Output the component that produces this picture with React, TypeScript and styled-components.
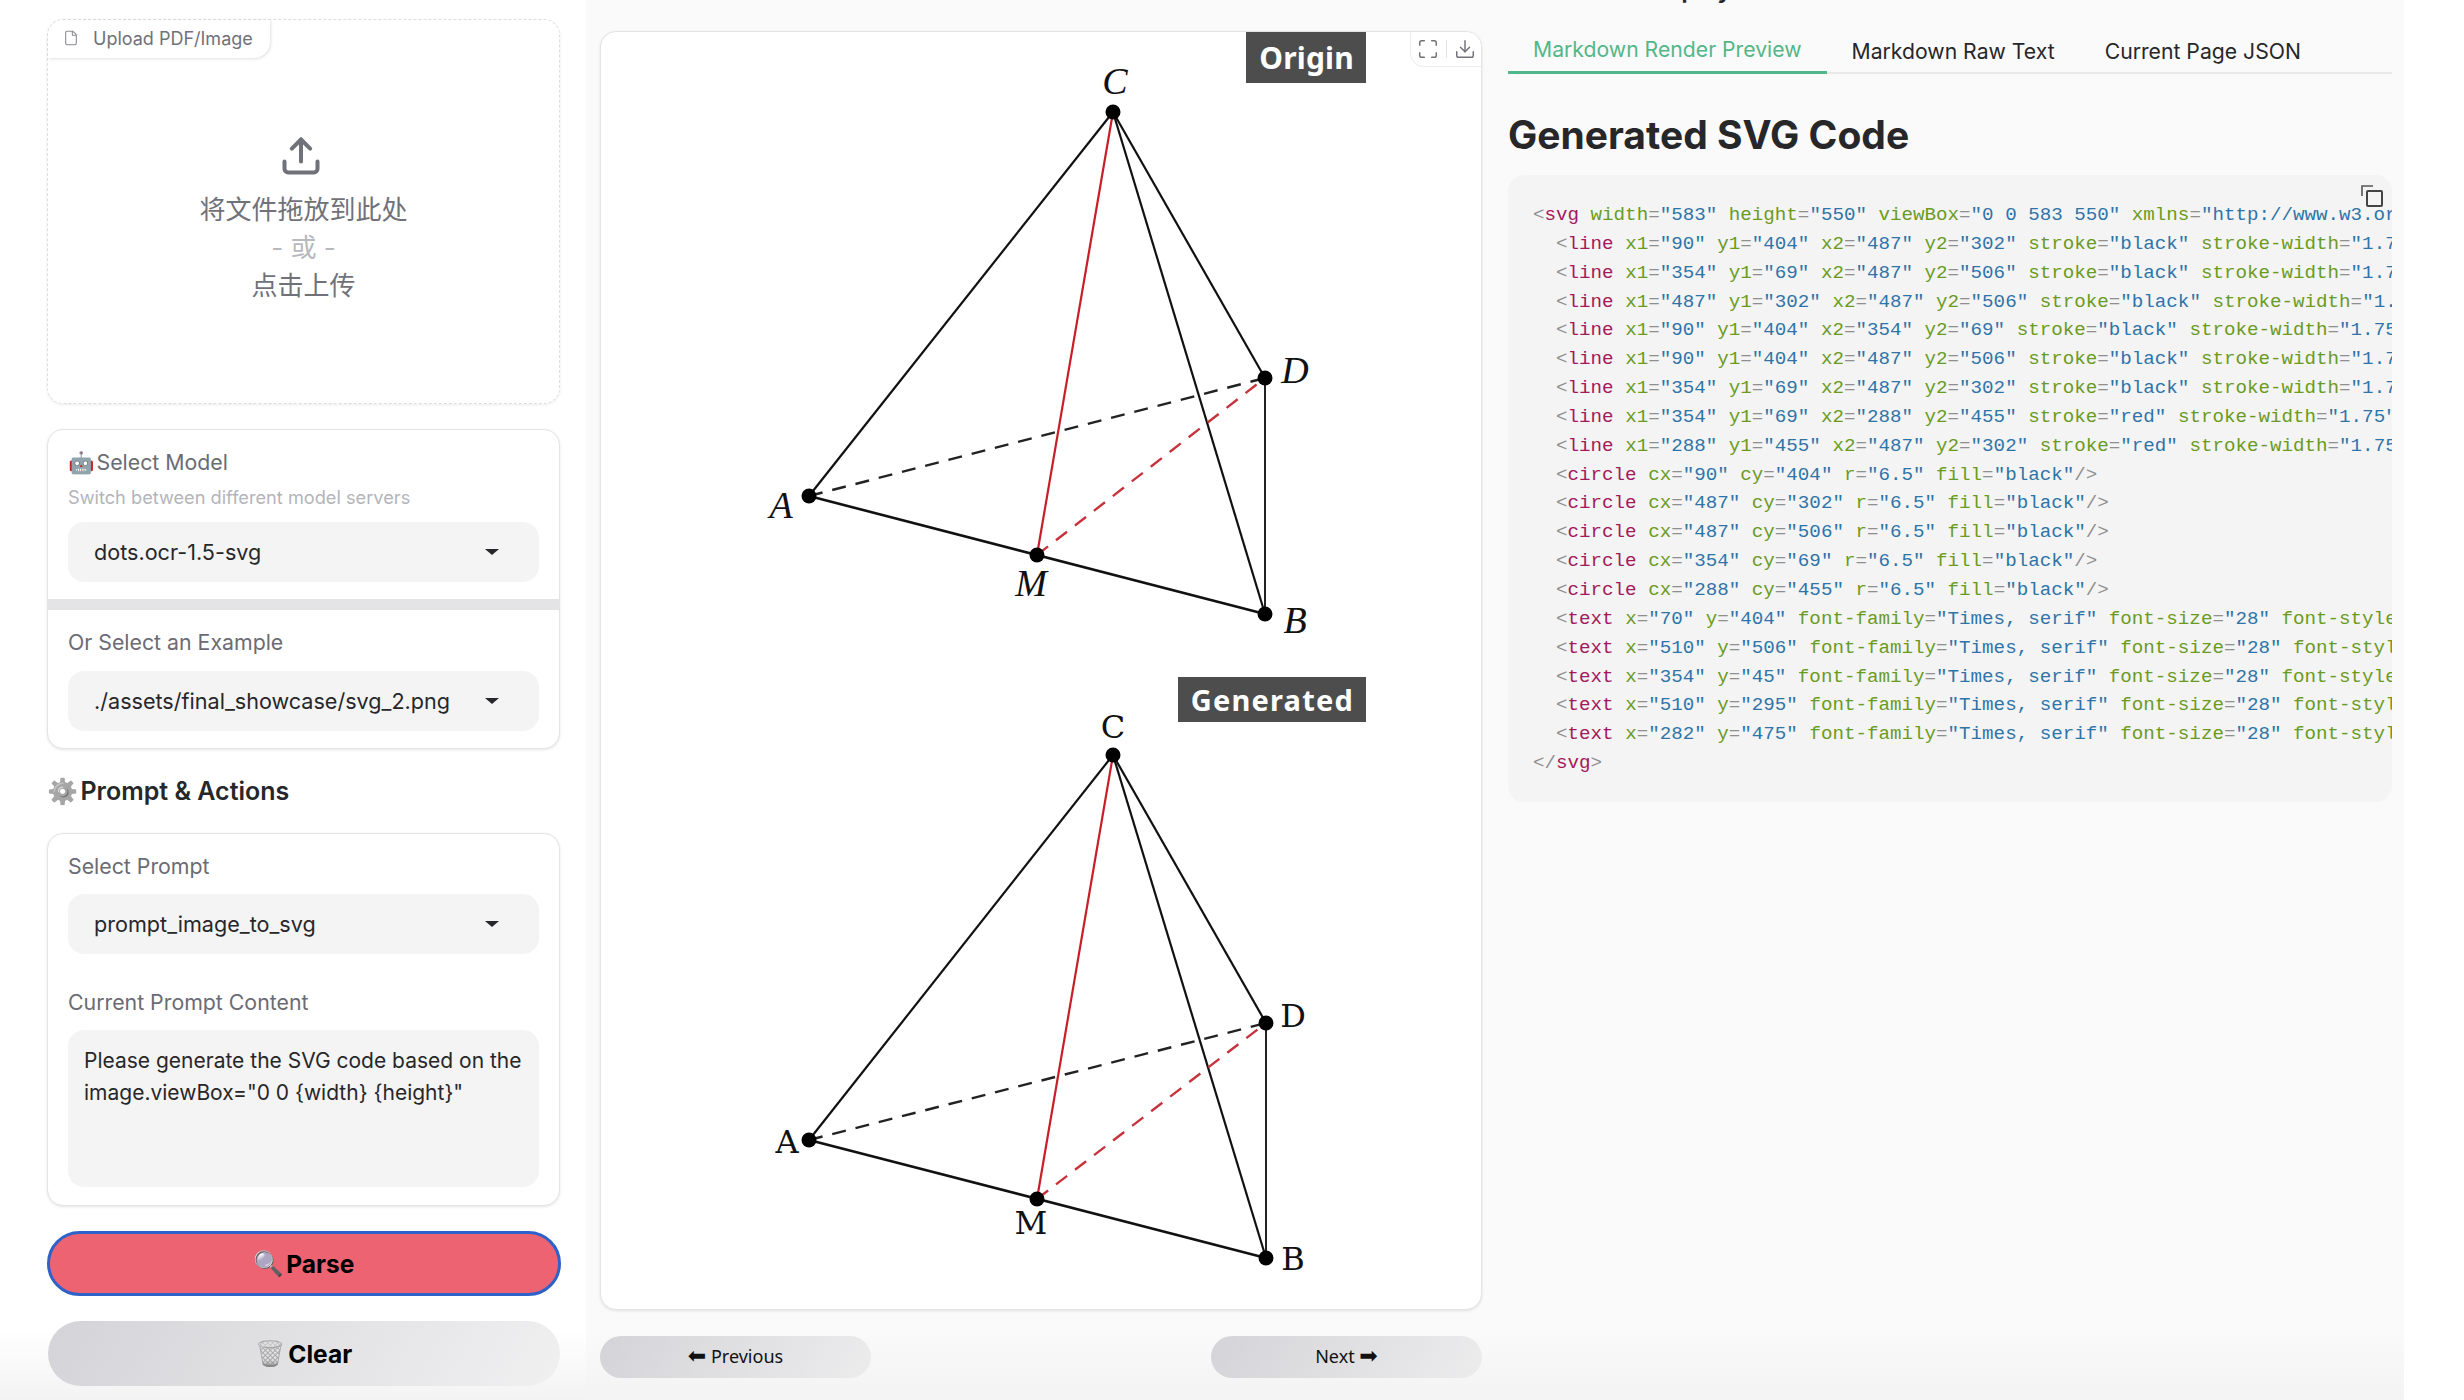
import React from "react";
import styled, { createGlobalStyle } from "styled-components";
import { File, Upload, Maximize, Download } from "lucide-react";

const GlobalStyle = createGlobalStyle`
  html, body {
    margin: 0;
    padding: 0;
    height: 1400px;
    overflow: hidden;
    background: #fff;
  }
  * {
    box-sizing: border-box;
  }
`;

const sans = `Inter, "Noto Sans", "Noto Sans CJK SC", sans-serif`;
const emoji = `"Noto Color Emoji", "Noto Sans", sans-serif`;

type Token = { t: string; c: "p" | "n" | "a" | "s" };

const parseLine = (line: string): Token[] => {
  // split into punctuation, tag name, attr names and quoted strings
  const out: Token[] = [];
  const re = /(<\/?)([a-z]+)|([a-zA-Z0-9-]+)(=)("[^"]*"?)|(\/?>)|(\s+)/g;
  let m: RegExpExecArray | null;
  while ((m = re.exec(line))) {
    if (m[1]) {
      out.push({ t: m[1], c: "p" });
      out.push({ t: m[2], c: "n" });
    } else if (m[3]) {
      out.push({ t: m[3], c: "a" });
      out.push({ t: m[4], c: "p" });
      out.push({ t: m[5], c: "s" });
    } else if (m[6]) {
      out.push({ t: m[6], c: "p" });
    } else if (m[7]) {
      out.push({ t: m[7], c: "p" });
    }
  }
  return out;
};

const lineEl = (a: number, b: number, c: number, d: number, col: string) =>
  `  <line x1="${a}" y1="${b}" x2="${c}" y2="${d}" stroke="${col}" stroke-width="1.75"/>`;
const circleEl = (a: number, b: number) => `  <circle cx="${a}" cy="${b}" r="6.5" fill="black"/>`;
const textEl = (a: number, b: number) =>
  `  <text x="${a}" y="${b}" font-family="Times, serif" font-size="28" font-style="italic"/>`;

const codeLines = [
  `<svg width="583" height="550" viewBox="0 0 583 550" xmlns="http://www.w3.org/2000/svg">`,
  lineEl(90, 404, 487, 302, "black"),
  lineEl(354, 69, 487, 506, "black"),
  lineEl(487, 302, 487, 506, "black"),
  lineEl(90, 404, 354, 69, "black"),
  lineEl(90, 404, 487, 506, "black"),
  lineEl(354, 69, 487, 302, "black"),
  lineEl(354, 69, 288, 455, "red"),
  lineEl(288, 455, 487, 302, "red"),
  circleEl(90, 404),
  circleEl(487, 302),
  circleEl(487, 506),
  circleEl(354, 69),
  circleEl(288, 455),
  textEl(70, 404),
  textEl(510, 506),
  textEl(354, 45),
  textEl(510, 295),
  textEl(282, 475),
  `</svg>`,
];

type Pt = [number, number];
type Diagram = {
  h: number;
  A: Pt;
  B: Pt;
  C: Pt;
  D: Pt;
  M: Pt;
  labels: [string, number, number][];
  italic: boolean;
};

// both drawings use coordinates local to their part of the image card
const origin: Diagram = {
  h: 640,
  A: [208, 464],
  B: [664, 582],
  C: [512, 80],
  D: [664, 346],
  M: [436, 523],
  labels: [
    ["C", 514, 62],
    ["D", 694, 351],
    ["A", 180, 486],
    ["M", 430, 564],
    ["B", 694, 601],
  ],
  italic: true,
};

const generated: Diagram = {
  h: 638,
  A: [208, 468],
  B: [665, 586],
  C: [512, 83],
  D: [665, 351],
  M: [436, 527],
  labels: [
    ["C", 512, 66],
    ["D", 692, 355],
    ["A", 186, 481],
    ["M", 430, 562],
    ["B", 692, 598],
  ],
  italic: false,
};

const Geometry = ({ d }: { d: Diagram }) => {
  const seg = (p: Pt, q: Pt, col: string, w: number, dash?: string) => (
    <line x1={p[0]} y1={p[1]} x2={q[0]} y2={q[1]} stroke={col} strokeWidth={w} strokeDasharray={dash} />
  );
  return (
    <DiagramSvg viewBox={`0 0 880 ${d.h}`} $h={d.h}>
      {seg(d.A, d.C, "#111", 2.2)}
      {seg(d.C, d.D, "#111", 2.2)}
      {seg(d.C, d.B, "#111", 2.2)}
      {seg(d.D, d.B, "#222", 2)}
      {seg(d.A, d.B, "#111", 2.6)}
      {seg(d.A, d.D, "#222", 2.4, "14 10")}
      {seg(d.M, d.D, "#c8323c", 2.4, "14 10")}
      {seg(d.C, d.M, "#c81e28", 2.2)}
      {[d.A, d.B, d.C, d.D, d.M].map((p, i) => (
        <circle key={i} cx={p[0]} cy={p[1]} r={7.5} fill="#000" />
      ))}
      {d.labels.map(([s, x, y]) => (
        <text
          key={s}
          x={x}
          y={y}
          textAnchor="middle"
          fontFamily={d.italic ? '"Liberation Serif", serif' : '"DejaVu Serif", serif'}
          fontStyle={d.italic ? "italic" : "normal"}
          fontSize={d.italic ? 38 : 32}
          fill="#111"
        >
          {s}
        </text>
      ))}
    </DiagramSvg>
  );
};

export default function App() {
  return (
    <Page>
      <GlobalStyle />
      <Sidebar>
        <UploadCard>
          <UploadTab>
            <File size={16} strokeWidth={1.6} color="#8a8a94" />
            Upload PDF/Image
          </UploadTab>
          <UploadGlyph>
            <Upload size={44} strokeWidth={2.2} color="#71717a" />
          </UploadGlyph>
          <DropText>将文件拖放到此处</DropText>
          <DropOr>- 或 -</DropOr>
          <DropText>点击上传</DropText>
        </UploadCard>

        <Card $mb={26}>
          <Section $pb={17}>
            <Label>
              <Emoji>🤖</Emoji> Select Model
            </Label>
            <Hint>Switch between different model servers</Hint>
            <Dropdown>
              dots.ocr-1.5-svg
              <Caret />
            </Dropdown>
          </Section>
          <Divider />
          <Section $pb={17}>
            <Label>Or Select an Example</Label>
            <Dropdown $mt={16}>
              ./assets/final_showcase/svg_2.png
              <Caret />
            </Dropdown>
          </Section>
        </Card>

        <SectionTitle>
          <Emoji $gray>⚙️</Emoji> Prompt &amp; Actions
        </SectionTitle>

        <Card>
          <Section $pb={18}>
            <Label>Select Prompt</Label>
            <Dropdown $mt={15}>
              prompt_image_to_svg
              <Caret />
            </Dropdown>
            <Label $mt={35}>Current Prompt Content</Label>
            <TextArea>
              Please generate the SVG code based on the image.viewBox="0 0 {"{width}"} {"{height}"}"
            </TextArea>
          </Section>
        </Card>

        <ParseButton>
          <Emoji>🔍</Emoji> Parse
        </ParseButton>
        <ClearButton>
          <Emoji $gray>🗑️</Emoji> Clear
        </ClearButton>
      </Sidebar>

      <Main>
        <ResultTitle>Result Display</ResultTitle>
        <Columns>
          <ImageColumn>
            <ImageCard>
              <FigureBlock>
                <Geometry d={origin} />
                <Tag $top={0} $h={51} $size={30} $track={0.2}>
                  Origin
                </Tag>
              </FigureBlock>
              <FigureBlock>
                <Geometry d={generated} />
                <Tag $top={5} $h={45} $size={29} $track={1.2}>
                  Generated
                </Tag>
              </FigureBlock>
              <Tools>
                <Maximize size={22} strokeWidth={1.6} color="#71717a" />
                <ToolSep />
                <Download size={22} strokeWidth={1.6} color="#71717a" />
              </Tools>
            </ImageCard>
            <Pager>
              <PagerButton>
                <Arrow>⬅</Arrow> Previous
              </PagerButton>
              <PagerButton>
                Next <Arrow>➡</Arrow>
              </PagerButton>
            </Pager>
          </ImageColumn>

          <ResultColumn>
            <Tabs>
              <Tab $active>Markdown Render Preview</Tab>
              <Tab>Markdown Raw Text</Tab>
              <Tab>Current Page JSON</Tab>
            </Tabs>
            <CodeHeading>Generated SVG Code</CodeHeading>
            <CodeBlock>
              <CopyIcon viewBox="0 0 22 22">
                <rect x="6" y="6" width="15" height="15" rx="1" fill="none" stroke="#444" strokeWidth="2" />
                <path d="M1 11V1h11" fill="none" stroke="#555" strokeWidth="1.6" />
              </CopyIcon>
              {codeLines.map((line, i) => (
                <CodeLine key={i}>
                  {parseLine(line).map((tok, j) => (
                    <Tok key={j} $c={tok.c}>
                      {tok.t}
                    </Tok>
                  ))}
                </CodeLine>
              ))}
            </CodeBlock>
          </ResultColumn>
        </Columns>
      </Main>
    </Page>
  );
}

const Page = styled.div`
  display: flex;
  width: 2464px;
  height: 1400px;
  overflow: hidden;
  font-family: ${sans};
  background: #fff;
`;

const Sidebar = styled.aside`
  width: 586px;
  flex: none;
  padding: 19px 26px 0 47px;
  display: flex;
  flex-direction: column;
  background: linear-gradient(#fff calc(100% - 70px), #f3f3f4);
`;

const Emoji = styled.span<{ $gray?: boolean }>`
  font-family: ${emoji};
  margin-right: -4px;
  filter: ${(p) => (p.$gray ? "grayscale(1)" : "none")};
`;

const Card = styled.div<{ $mb?: number }>`
  background: #fff;
  border: 1px solid #e4e4e7;
  border-radius: 16px;
  box-shadow: 0 1px 3px rgba(0, 0, 0, 0.1);
  overflow: hidden;
  margin-bottom: ${(p) => p.$mb ?? 25}px;
`;

const UploadCard = styled.div`
  position: relative;
  height: 385px;
  margin-bottom: 25px;
  border: 1.5px dashed #dedee2;
  border-radius: 16px;
  box-shadow: 0 1px 3px rgba(0, 0, 0, 0.08);
  display: flex;
  flex-direction: column;
  align-items: center;
  padding-top: 114px;
`;

const UploadGlyph = styled.div`
  height: 57px;
  margin-right: 6px;
`;

const UploadTab = styled.div`
  position: absolute;
  left: 0;
  top: 0;
  height: 38px;
  width: 222px;
  display: flex;
  align-items: center;
  gap: 14px;
  padding: 0 0 2px 15px;
  font-size: 18px;
  color: #71717a;
  border-radius: 16px 0 16px 0;
  box-shadow: 1px 1px 3px rgba(0, 0, 0, 0.12);
  background: #fff;
`;

const DropText = styled.div`
  font-size: 26px;
  line-height: 38px;
  color: #71717a;
`;

const DropOr = styled(DropText)`
  color: #b8b8be;
`;

const Section = styled.div<{ $pb: number }>`
  padding: 19px 20px ${(p) => p.$pb}px;
`;

const Label = styled.div<{ $mt?: number }>`
  font-size: 21.3px;
  line-height: 26px;
  color: #6b6b74;
  margin-top: ${(p) => p.$mt ?? 0}px;
`;

const Hint = styled.div`
  font-size: 18.2px;
  line-height: 24px;
  margin-top: 9px;
  color: #b4b4ba;
`;

const Dropdown = styled.div<{ $mt?: number }>`
  position: relative;
  height: 60px;
  margin-top: ${(p) => p.$mt ?? 13}px;
  padding: 0 26px;
  display: flex;
  align-items: center;
  font-size: 21.6px;
  color: #27272a;
  background: #f4f4f5;
  border-radius: 16px;
`;

const Caret = styled.span`
  position: absolute;
  right: 40px;
  top: 27px;
  border-left: 7px solid transparent;
  border-right: 7px solid transparent;
  border-top: 6px solid #27272a;
`;

const Divider = styled.div`
  height: 11px;
  background: #e4e4e7;
`;

const SectionTitle = styled.h2`
  margin: 0 0 25px;
  font-size: 25px;
  line-height: 33px;
  font-weight: 600;
  color: #27272a;
`;

const TextArea = styled.div`
  height: 157px;
  margin-top: 15px;
  padding: 15px 16px;
  font-size: 21px;
  line-height: 32px;
  color: #27272a;
  background: #f4f4f5;
  border-radius: 16px;
`;

const BigButton = styled.button`
  width: 514px;
  height: 65px;
  border-radius: 33px;
  font-family: ${sans};
  font-size: 24.5px;
  font-weight: 700;
  color: #000;
  display: flex;
  align-items: center;
  justify-content: center;
  gap: 6px;
`;

const ParseButton = styled(BigButton)`
  border: 3px solid #2f62c9;
  background: #ee6372;
  margin-bottom: 25px;
`;

const ClearButton = styled(BigButton)`
  width: 512px;
  margin-left: 1px;
  border: none;
  background: linear-gradient(120deg, #d4d4d8, #f0f0f1);
`;

const Main = styled.main`
  width: 1818px;
  height: 1400px;
  flex: none;
  background: linear-gradient(#fafafa calc(100% - 70px), #f3f3f4);
  padding: 0 12px 0 14px;
`;

const ResultTitle = styled.div`
  height: 38px;
  margin-top: -27px;
  font-size: 25px;
  line-height: 33px;
  font-weight: 600;
  color: #27272a;
  padding-left: 961px;
`;

const Columns = styled.div`
  display: flex;
  gap: 26px;
  margin-top: 20px;
`;

const ImageColumn = styled.div`
  width: 882px;
  flex: none;
`;

const ImageCard = styled.div`
  position: relative;
  height: 1279px;
  background: #fff;
  border: 1px solid #e4e4e7;
  border-radius: 16px;
  box-shadow: 0 1px 3px rgba(0, 0, 0, 0.1);
  overflow: hidden;
`;

const FigureBlock = styled.div`
  position: relative;
`;

const DiagramSvg = styled.svg<{ $h: number }>`
  display: block;
  width: 880px;
  height: ${(p) => p.$h}px;
`;

const Tag = styled.div<{ $top: number; $h: number; $size: number; $track: number }>`
  position: absolute;
  right: 115px;
  top: ${(p) => p.$top}px;
  height: ${(p) => p.$h}px;
  padding: 0 12px 0 13px;
  display: flex;
  align-items: center;
  background: #4d4d4d;
  color: #fff;
  font-family: "Noto Sans", sans-serif;
  font-weight: 700;
  font-size: ${(p) => p.$size}px;
  letter-spacing: ${(p) => p.$track}px;
`;

const Tools = styled.div`
  position: absolute;
  right: 0;
  top: 0;
  width: 71px;
  height: 35px;
  display: flex;
  align-items: center;
  justify-content: center;
  gap: 7px;
  background: #fff;
  border-left: 1px solid #ececef;
  border-bottom: 1px solid #ececef;
  border-radius: 0 0 0 14px;
`;

const ToolSep = styled.span`
  width: 1px;
  height: 18px;
  background: #e4e4e7;
`;

const Pager = styled.div`
  display: flex;
  justify-content: space-between;
  margin-top: 26px;
`;

const PagerButton = styled.button`
  width: 271px;
  height: 42px;
  padding: 0 0 2px;
  border: none;
  border-radius: 21px;
  background: linear-gradient(120deg, #d4d4d8, #ececed);
  font-family: "Noto Sans", "DejaVu Sans", sans-serif;
  font-size: 18px;
  color: #111;
`;

const Arrow = styled.span`
  font-size: 22px;
  line-height: 18px;
`;

const ResultColumn = styled.div`
  flex: 1;
  min-width: 0;
`;

const Tabs = styled.div`
  display: flex;
  height: 44px;
  margin-top: -1px;
  border-bottom: 2px solid #e9e9eb;
`;

const Tab = styled.div<{ $active?: boolean }>`
  height: 44px;
  padding: 0 25px 3px;
  display: flex;
  align-items: center;
  font-size: 21.2px;
  color: ${(p) => (p.$active ? "#52b788" : "#27272a")};
  border-bottom: ${(p) => (p.$active ? "3px solid #52b788" : "none")};
`;

const CodeHeading = styled.h1`
  margin: 38px 0 0;
  height: 63px;
  font-size: 39px;
  line-height: 46px;
  font-weight: 700;
  color: #27272a;
`;

const CodeBlock = styled.div`
  position: relative;
  height: 627px;
  padding: 26px 0 0 25px;
  background: #f4f4f5;
  border-radius: 16px;
  overflow: hidden;
`;

const CopyIcon = styled.svg`
  position: absolute;
  right: 9px;
  top: 10px;
  width: 22px;
  height: 22px;
`;

const CodeLine = styled.div`
  white-space: pre;
  font-family: "Liberation Mono", monospace;
  font-size: 19.2px;
  line-height: 28.85px;
`;

const tokenColors = { p: "#8f8f8f", n: "#a3195b", a: "#6b9b1e", s: "#2f74a8" };

const Tok = styled.span<{ $c: Token["c"] }>`
  color: ${(p) => tokenColors[p.$c]};
`;
